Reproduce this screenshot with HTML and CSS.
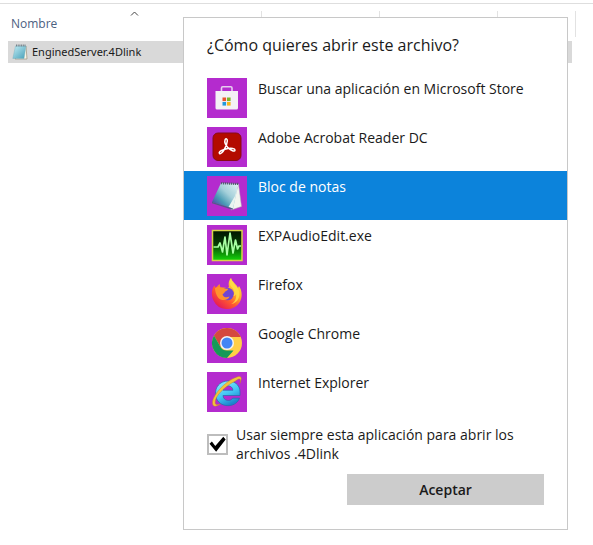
FILE: index.html
```
<!DOCTYPE html>
<html lang="es">
<head>
<meta charset="utf-8">
<title>Abrir con</title>
<link rel="stylesheet" href="styles.css">
</head>
<body>
<main class="explorer">
  <table class="files">
    <colgroup><col><col class="col-mid"><col class="col-mid"><col class="col-end"></colgroup>
    <thead>
      <tr>
        <th scope="col"><svg class="sort" viewBox="0 0 9 5" aria-hidden="true"><path d="M1 4.500 4.500 1 8 4.500" fill="none" stroke="#444"/></svg><span class="name-head">Nombre</span></th>
        <td></td><td></td><td></td>
      </tr>
    </thead>
    <tbody>
      <tr>
        <td colspan="4"><div class="file">
          <svg class="file-icon" viewBox="0 0 16 16" aria-hidden="true"><defs><linearGradient id="pad" x2="1" y2="1"><stop stop-color="#c3edf5"/><stop offset="1" stop-color="#459fb8"/></linearGradient></defs><path d="M14 2l1 13H3z" fill="#f8f5e6" stroke="#9a917b" stroke-width=".7"/><path d="M3.500 2H14l-2 12.500H.8z" fill="url(#pad)" stroke="#73aeba" stroke-width=".4"/><path d="M4 1.500h10" stroke="#74818a" stroke-width="2" stroke-dasharray="1 .7"/></svg>
          <span>EnginedServer.4Dlink</span>
        </div></td>
      </tr>
    </tbody>
  </table>
</main>

<section class="dialog" role="dialog" aria-labelledby="title">
  <h1 id="title">¿Cómo quieres abrir este archivo?</h1>
  <ul class="apps">
    <li><button type="button" class="app">
      <svg class="tile" viewBox="0 0 40 40" aria-hidden="true"><path d="M14.500 14V10q0-1.200 1.200-1.200h8.100q1.200 0 1.200 1.200v4" fill="none" stroke="#e6cdee" stroke-width="1.600"/><path d="M8.500 13h22.500v17q0 1.500-1.500 1.500H10q-1.500 0-1.500-1.500z" fill="#f4f1f5"/><path d="M15.500 19.500h3.600v3.600h-3.600z" fill="#e9532d"/><path d="M20 19.500h3.600v3.600H20z" fill="#7cb52b"/><path d="M15.500 24h3.600v3.600h-3.600z" fill="#2399dc"/><path d="M20 24h3.600v3.600H20z" fill="#f5b51c"/></svg>
      <span>Buscar una aplicación en Microsoft Store</span></button></li>
    <li><button type="button" class="app">
      <svg class="tile" viewBox="0 0 40 40" aria-hidden="true"><rect x="6" y="6" width="28" height="27.500" rx="5" fill="#b30b00" stroke="#870b18"/><path d="M12.500 26.500c-1.800-2 5-4.500 8.500-5 3-.5 7-.2 7 1.500 0 2.300-4.500.2-6.500-1.800-2.500-2.500-4.200-6.200-3.400-8.500.6-1.700 2.300-.7 2.200 1.300-.2 4.500-5.300 14-7.800 12.500z" fill="none" stroke="#fff" stroke-width="1.500"/></svg>
      <span>Adobe Acrobat Reader DC</span></button></li>
    <li><button type="button" class="app selected" aria-pressed="true">
      <svg class="tile" viewBox="0 0 40 40" aria-hidden="true"><defs><linearGradient id="note" x1=".9" y1="0" x2="0" y2=".9"><stop stop-color="#dceff1"/><stop offset=".4" stop-color="#a5d0da"/><stop offset=".68" stop-color="#4a9cb5"/><stop offset="1" stop-color="#4b3aa6"/></linearGradient></defs><path d="M31.500 8 34.500 30.500 24 34z" fill="#f2f5ef" stroke="#aaa7b2" stroke-width=".5"/><path d="M14 7 31.500 8 26 32.500 5 26z" fill="url(#note)"/><path d="M28 20 21.500 31l4.500 1.500L30.500 12z" fill="#e8f3ef"/><path d="M5 26v1.200l20.500 6.600.5-1.300z" fill="#4f5e86"/><path d="M14 7.200 32 8" stroke="#53616e" stroke-width="2.200" stroke-dasharray="1.200 .8"/></svg>
      <span>Bloc de notas</span></button></li>
    <li><button type="button" class="app">
      <svg class="tile" viewBox="0 0 40 40" aria-hidden="true"><defs><linearGradient id="wave" x2="0" y2="1"><stop stop-color="#001400"/><stop offset=".45" stop-color="#063c04"/><stop offset="1" stop-color="#14d60a"/></linearGradient></defs><rect x="5.500" y="5.500" width="29.500" height="30" fill="url(#wave)" stroke="#d7d548" stroke-width="1.500"/><path d="M6.500 22H11l2-4 2.500 9L18 12l2 18 3-22 3 20 2.500-13 2 9 1.500-3h2" fill="none" stroke="#a8ffa3" stroke-width="1.700" stroke-linejoin="round"/></svg>
      <span>EXPAudioEdit.exe</span></button></li>
    <li><button type="button" class="app">
      <svg class="tile" viewBox="0 0 40 40" aria-hidden="true"><defs><linearGradient id="fox" x1=".9" y1=".05" x2=".2" y2=".95"><stop stop-color="#ffec45"/><stop offset=".35" stop-color="#ffb52c"/><stop offset=".65" stop-color="#ff592f"/><stop offset="1" stop-color="#e51758"/></linearGradient></defs><path d="M24 4c1 4 5.500 6 7 10l1-2c3.500 5 3.500 12 .5 16.500A15 15 0 0 1 6.500 26.500C4 21 4.500 15 7.500 11.500L8.500 14l4-4 1 4c2.500-.7 5-.5 6.500.5l2-1.500c-1-4 0-7 2-9z" fill="url(#fox)"/><circle cx="20.500" cy="20" r="6.300" fill="#7046d4"/><path d="M8 14c3-2 7.500-.7 9.500.8H21c0 2.200-3 2.200-3.500 3.700l-2 2c1 3 4.500 3.500 7 2-1 4-8 5-11.500 1-2-2.500-3-7-3-9.500z" fill="#ff932c"/><path d="M24 4c-2 4-1.500 7 1 9.500 2.500 2.500 3 5.500 1.500 8.500 2 0 2.500-2 2.500-2 1 5-2 9-5 10 7-1 9.500-7.500 8-13-1-4-7-8-8-13z" fill="#ffdf45" opacity=".85"/></svg>
      <span>Firefox</span></button></li>
    <li><button type="button" class="app">
      <svg class="tile" viewBox="0 0 40 40" aria-hidden="true"><circle cx="20" cy="20" r="15" fill="#ffcf48"/><path d="M7 12.500a15 15 0 0 1 26 0l.8 1.500H20L13.500 24z" fill="#d4493f"/><path d="M7 12.500 13.500 24q2 3.500 6.500 3.500h6.500L20 35A15 15 0 0 1 7 12.500z" fill="#159a58"/><circle cx="20" cy="20" r="7" fill="#f4f4f4"/><circle cx="20" cy="20" r="5.500" fill="#4385f5"/></svg>
      <span>Google Chrome</span></button></li>
    <li><button type="button" class="app">
      <svg class="tile" viewBox="0 0 40 40" aria-hidden="true"><defs><linearGradient id="ie" x2=".5" y2="1"><stop stop-color="#9aedff"/><stop offset=".6" stop-color="#42c7f3"/><stop offset="1" stop-color="#1c83ce"/></linearGradient></defs><path d="M33 23.500H16c.4 5.500 7.500 6.500 9.500 2.700h7C28.500 37.500 8.500 36 8.500 21.500 8.500 5 33 5 33 20z" fill="url(#ie)" stroke="#236aa9" stroke-width=".7"/><path d="M16 18.300h10c-.5-6-9.500-6-10 0z" fill="#b42bce" stroke="#236aa9" stroke-width=".6"/><path d="M28.500 9c4.500-3.500 6-2 4.300 2.500 3.200-6.500 1.200-9-5.300-5.500C18 10 6.500 22 5.500 30c-.5 5.500 3.500 5 8 2-5 2-6 0-5-4 2-7 13-16 20-19z" fill="#f3c23c" stroke="#b98222" stroke-width=".4"/></svg>
      <span>Internet Explorer</span></button></li>
  </ul>
  <div class="always">
    <input type="checkbox" id="always" checked>
    <label for="always">Usar siempre esta aplicación para abrir los archivos .4Dlink</label>
  </div>
  <button type="button" class="accept">Aceptar</button>
</section>
</body>
</html>
```
FILE: styles.css
```
* {
  box-sizing: border-box;
}

body {
  margin: 0;
  background: #fff;
  color: #1a1a1a;
  font: 14px/20px "Open Sans", "Noto Sans", sans-serif;
}

.explorer {
  margin-top: 3px;
  padding: 7px 17px 0 8px;
  border-top: 1px solid #dedede;
}

.files {
  width: 100%;
  border-collapse: collapse;
  table-layout: fixed;
  font-size: 12px;
}

.col-mid {
  width: 118px;
}

.col-end {
  width: 78px;
}

.files td,
.files th {
  padding: 0;
}

.files thead th,
.files thead td {
  height: 26px;
  border-right: 1px solid #e2e2e2;
}

.files th {
  color: #4c607f;
  font-weight: 400;
  line-height: 16px;
  text-align: left;
  vertical-align: top;
}

.sort {
  display: block;
  width: 9px;
  height: 5px;
  margin: 0 auto;
}

.name-head {
  padding-left: 3px;
}

.file {
  display: flex;
  align-items: center;
  gap: 4px;
  height: 22px;
  margin: 4px 4px 0 0;
  padding-left: 4px;
  background: #d9d9d9;
  font: 11px/20px "Noto Sans", "Open Sans", sans-serif;
}

.file-icon {
  width: 16px;
  height: 16px;
}

.dialog {
  position: absolute;
  top: 17px;
  right: 25px;
  left: 183px;
  padding-bottom: 24px;
  border: 1px solid #c8c8c8;
  background: #fff;
}

h1 {
  margin: 0;
  padding: 15px 23px 16px;
  font-size: 16px;
  font-weight: 400;
  line-height: 24px;
}

.apps {
  margin: 0;
  padding: 0;
  list-style: none;
}

.app {
  display: flex;
  gap: 11px;
  width: 100%;
  height: 49px;
  padding: 5px 23px;
  border: 0;
  background: none;
  color: inherit;
  font: inherit;
  line-height: 22px;
  text-align: left;
}

.app.selected {
  background: #0c83db;
  color: #fff;
}

.tile {
  flex: none;
  width: 40px;
  height: 40px;
  background: #b42bce;
}

.always {
  display: flex;
  align-items: center;
  gap: 8px;
  padding: 9px 48px 11px 23px;
  line-height: 19px;
}

.always input {
  appearance: none;
  flex: none;
  width: 21px;
  height: 21px;
  margin: 0;
  border: 2px solid #bdbdbd;
  background: #fff;
}

.always input:checked::before {
  content: "";
  display: block;
  height: 17px;
  background: #000;
  clip-path: polygon(3% 48%, 17% 36%, 37% 62%, 84% 8%, 98% 24%, 42% 96%);
}

.accept {
  display: block;
  width: 197px;
  height: 31px;
  margin: 0 23px 0 auto;
  border: 0;
  background: #ccc;
  color: #1a1a1a;
  font: 600 14px/20px "Open Sans", "Noto Sans", sans-serif;
}
```
